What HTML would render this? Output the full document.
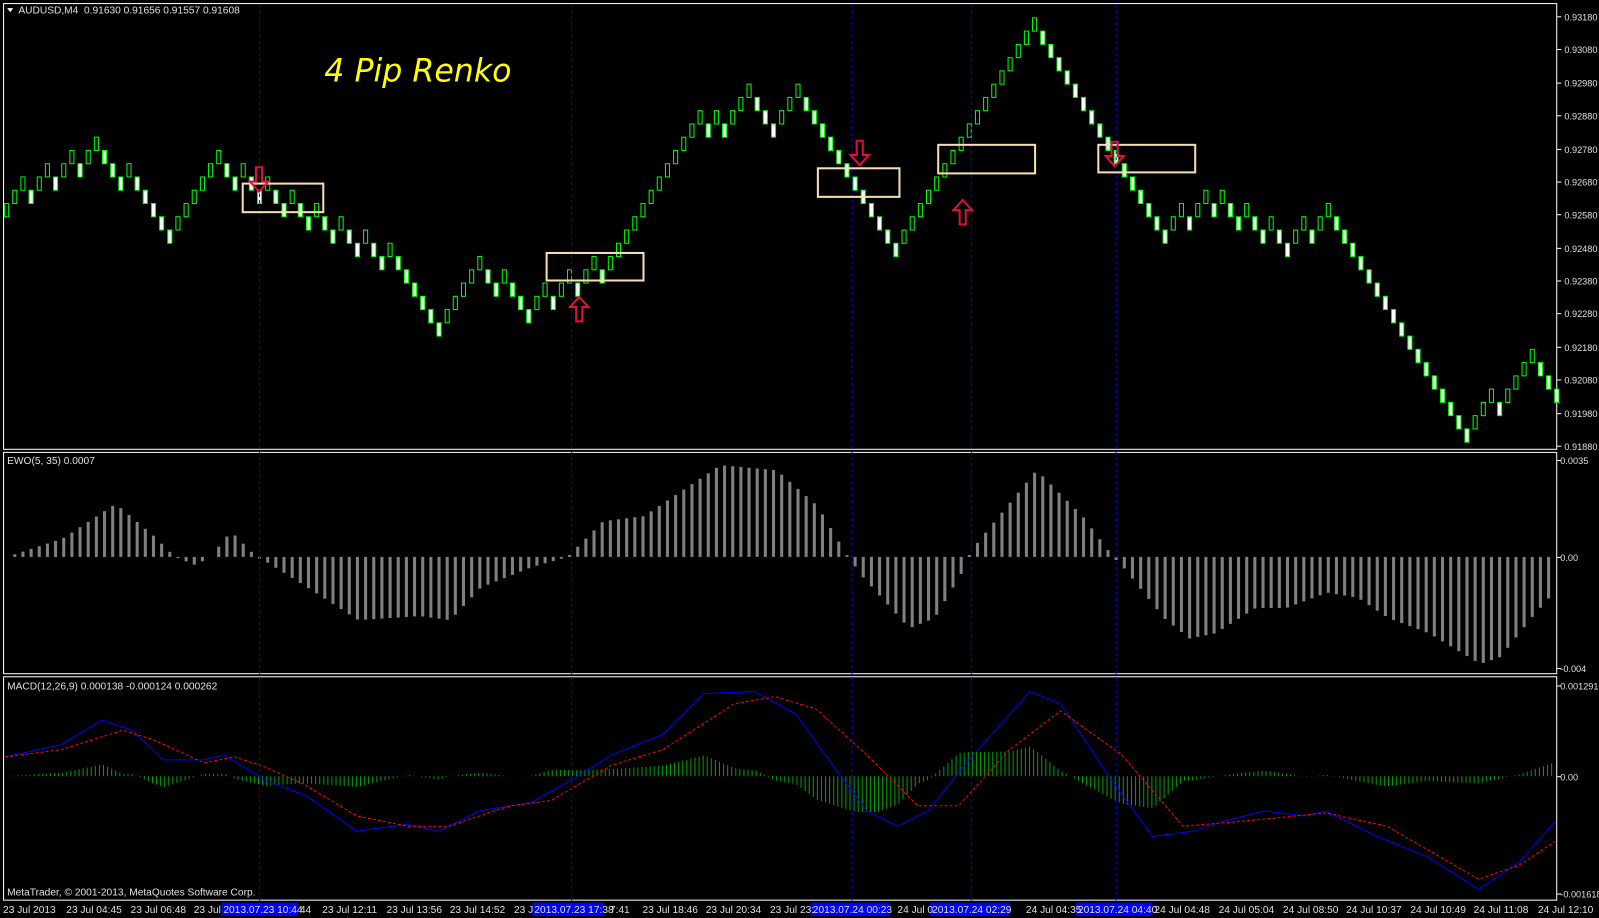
<!DOCTYPE html>
<html><head><meta charset="utf-8"><style>
html,body{margin:0;padding:0;background:#000;width:1599px;height:918px;overflow:hidden}
svg{display:block}
text{font-family:"Liberation Sans",sans-serif;font-size:10px;fill:#fff}
</style></head><body>
<svg id="s" width="1599" height="918" xmlns="http://www.w3.org/2000/svg">
<rect width="1599" height="918" fill="#000"/>
<g id="g" transform="scale(1.0198,1.02)"></g>
</svg>
<script>
var g=document.getElementById('g'),h='';
function R(x,y,w,hh,f,s,sw){h+='<rect x="'+x+'" y="'+y+'" width="'+w+'" height="'+hh+'" fill="'+f+'"'+(s?' stroke="'+s+'" stroke-width="'+(sw||1)+'"':'')+'/>';}
function T(x,y,t,c,st){h+='<text x="'+x+'" y="'+y+'" style="fill:'+(c||'#fff')+';'+(st||'')+'">'+t+'</text>';}
function L(x1,y1,x2,y2,c,d,w){h+='<line x1="'+x1+'" y1="'+y1+'" x2="'+x2+'" y2="'+y2+'" stroke="'+c+'" stroke-width="'+(w||1)+'"'+(d?' stroke-dasharray="'+d+'"':'')+'/>';}
R(3.5,3.5,1523,437,'none','#fff');R(3.5,443.5,1523,217,'none','#fff');R(3.5,663.5,1523,219,'none','#fff');
var tp=[[0,18],[12,23],[20,16],[26,22],[53,9],[58,14],[64,10],[86,25],[91,26],[94,24],[97,26],[109,14],[126,31],[141,16],[149,19],[158,15],[161,17],[180,1],[188,7],[190,5]];
var lv=[18],cur=18,k=0;
for(var i=1;i<tp.length;i++){var c0=tp[i-1][0],c1=tp[i][0],L1=tp[i][1],n=c1-c0;
 for(var s=1;s<=n;s++){var rem=n-s+1,need=L1-cur,dir=need>0?1:-1;if(need==0)dir=(s%2?1:-1);
  var mv;if(Math.abs(need)>=rem)mv=dir;else{var sl=rem-Math.abs(need);k++;mv=(k%3==0&&sl>=2)?-dir:dir;}
  cur+=mv;lv.push(cur);}}
for(var i=0;i<lv.length;i++){var x=4+i*8,up=i==0||lv[i]>lv[i-1];var yc=440-lv[i]*13;
 if(up)R(x+.5,yc-6.5,4,13,'#000','#00ff00');else R(x+.5,yc-6.5,4,13,'#fff','#00ff00');}
var ew=[[5,0],[60,18],[112,52],[150,20],[170,0],[190,-8],[205,0],[225,25],[250,0],[260,-5],[300,-30],[350,-62],[410,-58],[440,-62],[470,-30],[520,-10],[555,0],[570,15],[590,35],[630,40],[705,90],[760,85],[800,50],[830,0],[845,-20],[890,-70],[915,-60],[945,-10],[950,5],[970,30],[1015,85],[1060,40],[1090,0],[1100,-10],[1140,-60],[1165,-80],[1190,-75],[1230,-50],[1260,-50],[1300,-35],[1330,-40],[1360,-60],[1400,-75],[1450,-105],[1470,-98],[1500,-60],[1522,-35]];
function itp(a,x){for(var i=1;i<a.length;i++)if(x<=a[i][0]){var t=(x-a[i-1][0])/(a[i][0]-a[i-1][0]);return a[i-1][1]+t*(a[i][1]-a[i-1][1]);}return a[a.length-1][1];}
for(var x=5;x<1525;x+=8){var v=itp(ew,x);if(v>=0)R(x,546-v,3,v,'#808080');else R(x,546,3,-v,'#808080');}
var bl=[[5,742],[60,730],[100,706],[130,716],[160,745],[200,745],[220,740],[260,765],[300,780],[350,815],[400,808],[430,815],[470,795],[520,787],[560,765],[600,740],[650,720],[690,680],[740,678],[780,700],[820,755],[850,795],[880,810],[910,795],[950,745],[1010,678],[1040,690],[1090,765],[1130,820],[1170,815],[1200,805],[1240,795],[1280,800],[1300,795],[1350,820],[1400,840],[1450,872],[1490,845],[1525,805]];
var rd=[[5,742],[60,735],[120,716],[150,725],[200,748],[230,742],[260,752],[300,770],[350,800],[400,810],[440,810],[500,790],[540,785],[600,750],[650,735],[720,690],[760,683],[800,695],[850,740],[900,790],[940,790],[990,735],[1040,697],[1100,740],[1160,810],[1220,805],[1300,797],[1360,810],[1450,862],[1490,848],[1525,825]];
for(var x=5;x<1525;x+=4){var v=(itp(rd,x)-itp(bl,x))*0.7;if(v>35)v=35;if(v<-35)v=-35;if(v>=0)L(x+.5,761-v,x+.5,761,'#00a000');else L(x+.5,761,x+.5,761-v,'#00a000');}
function P(a){return a.map(function(p){return p[0]+','+p[1]}).join(' ');}
h+='<polyline points="'+P(bl)+'" fill="none" stroke="#0000ff" stroke-width="1"/>';
h+='<polyline points="'+P(rd)+'" fill="none" stroke="#ff0000" stroke-width="1" stroke-dasharray="3,2"/>';
[254,560,835,952,1094].forEach(function(x){L(x+.5,4,x+.5,884,'#0000ff','3,3');});
[[238,180,79,28],[536,248,95,27],[802,165,80,28],[920,142,95,28],[1077,142,95,27]].forEach(function(b){R(b[0],b[1],b[2],b[3],'none','#f5deb3',2);});
function arr(x,y,dn){var p;if(dn)p=[[x-3,y],[x+3,y],[x+3,y+14],[x+9,y+14],[x,y+24],[x-9,y+14],[x-3,y+14]];else p=[[x-3,y+24],[x+3,y+24],[x+3,y+10],[x+9,y+10],[x,y],[x-9,y+10],[x-3,y+10]];
 h+='<polygon points="'+P(p)+'" fill="none" stroke="#e0103a" stroke-width="2"/>';}
arr(254,164,1);arr(568,291,0);arr(843,138,1);arr(944,196,0);arr(1093,139,1);
h+='<polygon points="7,8 13,8 10,12" fill="#fff"/>';
T(18,13,'AUDUSD,M4&#160; 0.91630 0.91656 0.91557 0.91608','#e0e0e0');
T(318,80,'4 Pip Renko','#ffff00','font-size:31px;font-style:italic;font-family:\'DejaVu Sans\',sans-serif');
T(7,455,'EWO(5, 35) 0.0007','#e0e0e0');
T(7,676,'MACD(12,26,9) 0.000138 -0.000124 0.000262','#e0e0e0');
T(7,878,'MetaTrader, © 2001-2013, MetaQuotes Software Corp.','#e0e0e0');
var pl=['0.93180','0.93080','0.92980','0.92880','0.92780','0.92680','0.92580','0.92480','0.92380','0.92280','0.92180','0.92080','0.91980','0.91880'];
var py=[16,48,81,113,146,178,210,243,275,307,340,372,405,437];
var ax='font-size:9px';
for(var i=0;i<pl.length;i++){L(1527,py[i]+.5,1531,py[i]+.5,'#fff');T(1534,py[i]+4,pl[i],'#e0e0e0',ax);}
[[451,'0.0035'],[546,'0.00'],[655,'-0.004'],[672,'0.001291'],[761,'0.00'],[876,'-0.001618']].forEach(function(a){L(1527,a[0]+.5,1531,a[0]+.5,'#fff');T(1530,a[0]+4,a[1],'#e0e0e0',ax);});
[[217,75],[522,70],[795,77],[912,78],[1055,75]].forEach(function(b){R(b[0],885,b[1],13,'#0000ff');});
var tl=[[3,'23 Jul 2013'],[65,'23 Jul 04:45'],[128,'23 Jul 06:48'],[190,'23 Jul'],[219,'2013.07.23 10:44'],[294,'44'],[316,'23 Jul 12:11'],[379,'23 Jul 13:56'],[441,'23 Jul 14:52'],[504,'23 J'],[524,'2013.07.23 17:38'],[598,'7:41'],[630,'23 Jul 18:46'],[692,'23 Jul 20:34'],[755,'23 Jul 23:'],[797,'2013.07.24 00:23'],[880,'24 Jul 0'],[914,'2013.07.24 02:29'],[1006,'24 Jul 04:35'],[1057,'2013.07.24 04:40'],[1132,'24 Jul 04:48'],[1195,'24 Jul 05:04'],[1258,'24 Jul 08:50'],[1320,'24 Jul 10:37'],[1383,'24 Jul 10:49'],[1445,'24 Jul 11:08'],[1508,'24 Jul 12:10']];
tl.forEach(function(a){T(a[0],895,a[1],'#e0e0e0');});
g.innerHTML=h;
</script>
</body></html>
